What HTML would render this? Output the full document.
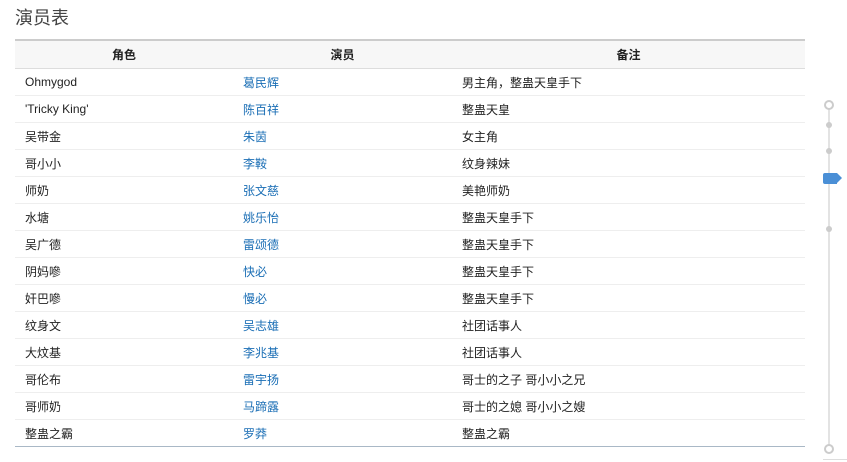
<!DOCTYPE html>
<html><head><meta charset="utf-8"><style>
body{margin:0;width:847px;height:462px;background:#fff;font-family:"Liberation Sans","Noto Sans CJK SC",sans-serif;position:relative;overflow:hidden}
h1{position:absolute;left:15px;top:6px;margin:0;font-size:18px;font-weight:normal;color:#444;line-height:24px}
table{position:absolute;left:15px;top:39px;width:790px;border-collapse:collapse;table-layout:fixed;font-size:12px;color:#222}
th{height:27px;background:#f7f7f7;border-top:2px solid #ccc;border-bottom:1px solid #ddd;font-weight:bold;text-align:center;padding:0}
td{height:26px;border-bottom:1px solid #eee;padding:0 0 0 10px;text-align:left}
tr:last-child td{border-bottom:1px solid #a9b8c6}
td a{color:#1a6eb5;text-decoration:none}
.c1{width:218px}.c2{width:219px}
.tl{position:absolute;left:828px;top:105px;width:2px;height:344px;background:#e3e3e3}
.o{position:absolute;left:824px;width:6px;height:6px;border:2px solid #ccc;border-radius:50%;background:#fff}
.d{position:absolute;left:826px;width:6px;height:6px;border-radius:50%;background:#ccc}
.f{position:absolute;left:823px;top:173px;width:14px;height:11px;background:#4a8fd6;border-radius:2px 0 0 2px}
.f:after{content:"";position:absolute;left:14px;top:0;border-left:5px solid #4a8fd6;border-top:5.5px solid transparent;border-bottom:5.5px solid transparent}
.b{position:absolute;left:823px;top:459px;width:24px;height:1px;background:#ddd}
</style></head><body>
<h1>演员表</h1>
<table>
<tr><th class="c1">角色</th><th class="c2">演员</th><th>备注</th></tr>
<tr><td>Ohmygod</td><td><a>葛民辉</a></td><td>男主角，整蛊天皇手下</td></tr>
<tr><td>'Tricky King'</td><td><a>陈百祥</a></td><td>整蛊天皇</td></tr>
<tr><td>吴带金</td><td><a>朱茵</a></td><td>女主角</td></tr>
<tr><td>哥小小</td><td><a>李鞍</a></td><td>纹身辣妹</td></tr>
<tr><td>师奶</td><td><a>张文慈</a></td><td>美艳师奶</td></tr>
<tr><td>水塘</td><td><a>姚乐怡</a></td><td>整蛊天皇手下</td></tr>
<tr><td>吴广德</td><td><a>雷颂德</a></td><td>整蛊天皇手下</td></tr>
<tr><td>阴妈嘇</td><td><a>快必</a></td><td>整蛊天皇手下</td></tr>
<tr><td>奸巴嘇</td><td><a>慢必</a></td><td>整蛊天皇手下</td></tr>
<tr><td>纹身文</td><td><a>吴志雄</a></td><td>社团话事人</td></tr>
<tr><td>大炆基</td><td><a>李兆基</a></td><td>社团话事人</td></tr>
<tr><td>哥伦布</td><td><a>雷宇扬</a></td><td>哥士的之子 哥小小之兄</td></tr>
<tr><td>哥师奶</td><td><a>马蹄露</a></td><td>哥士的之媳 哥小小之嫂</td></tr>
<tr><td>整蛊之霸</td><td><a>罗莽</a></td><td>整蛊之霸</td></tr>
</table>
<div class="tl"></div>
<div class="o" style="top:100px"></div>
<div class="d" style="top:122px"></div>
<div class="d" style="top:148px"></div>
<div class="f"></div>
<div class="d" style="top:226px"></div>
<div class="o" style="top:444px"></div>
<div class="b"></div>
</body></html>
